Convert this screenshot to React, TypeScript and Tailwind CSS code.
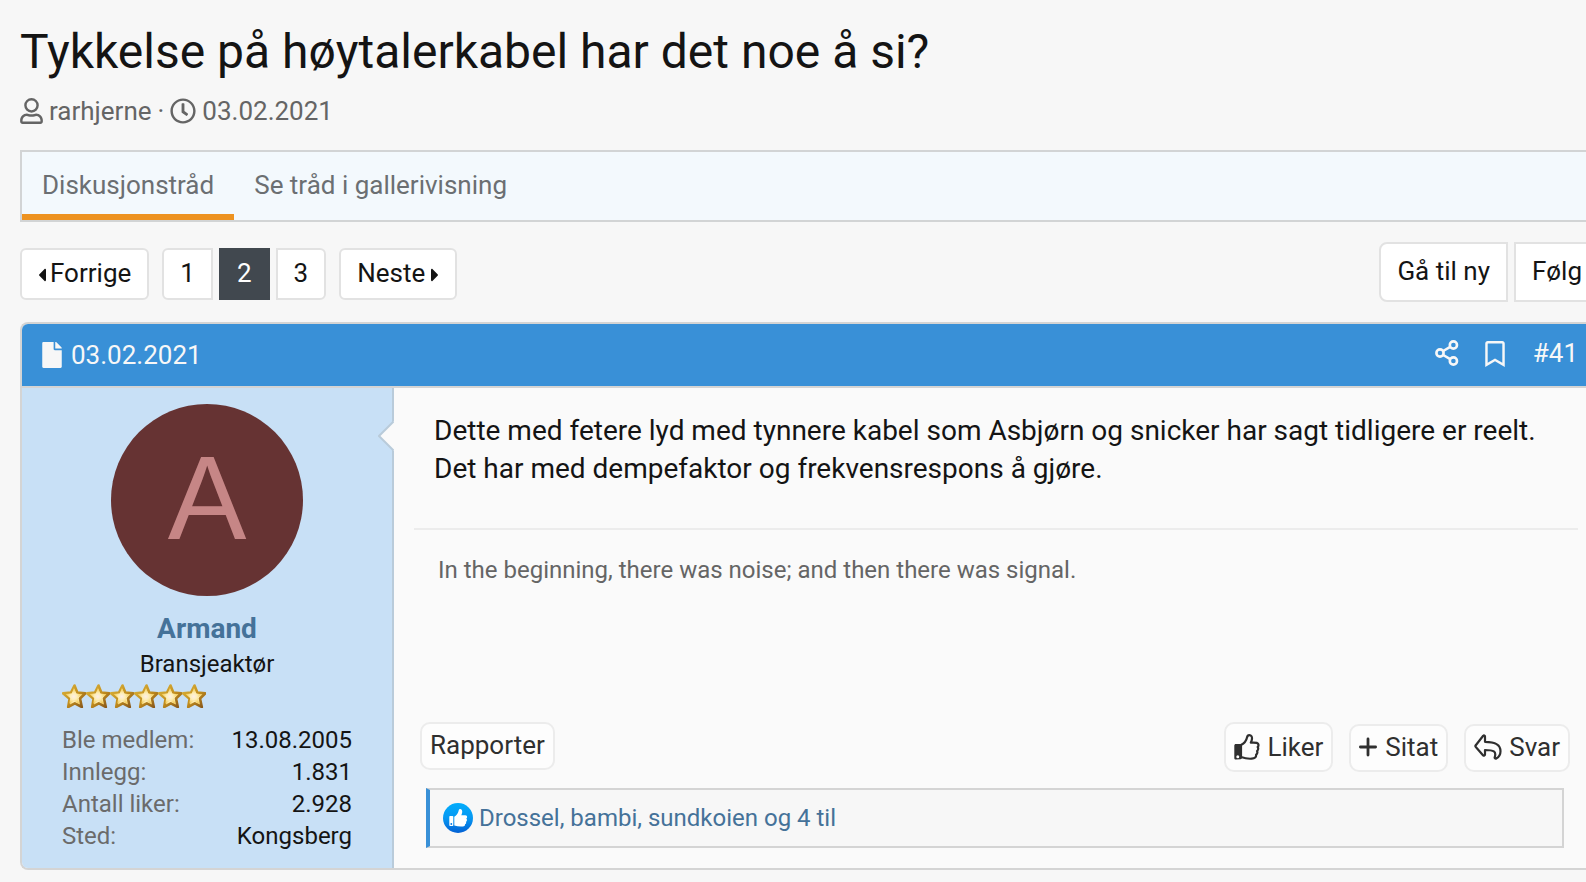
import React from 'react';
import { FaCaretLeft, FaCaretRight, FaFile, FaRegBookmark, FaRegClock } from 'react-icons/fa';

interface IconProps {
  className?: string;
}

const UserIcon: React.FC<IconProps> = ({ className }) => (
  <svg viewBox="0 0 448 512" className={className} fill="currentColor" aria-hidden="true">
    <path d="M224 0a144 144 0 1 0 0 288 144 144 0 0 0 0-288zm0 48a96 96 0 1 1 0 192 96 96 0 0 1 0-192zM313.600 304c-28.700 0-42.500 16-89.600 16s-60.800-16-89.600-16C60.200 304 0 364.200 0 438.400V464c0 26.500 21.500 48 48 48h352c26.500 0 48-21.500 48-48v-25.600c0-74.200-60.200-134.400-134.400-134.400zM400 464H48v-25.600c0-47.600 38.800-86.400 86.400-86.400 14.600 0 38.300 16 89.600 16 51.700 0 74.900-16 89.600-16 47.600 0 86.400 38.800 86.400 86.400z" />
  </svg>
);

const ShareIcon: React.FC<IconProps> = ({ className }) => (
  <svg viewBox="0 0 24 26" className={className} fill="none" stroke="currentColor" strokeWidth="2.6" aria-hidden="true">
    <circle cx="5" cy="13" r="3.6" />
    <circle cx="18.400" cy="5" r="3.6" />
    <circle cx="18.400" cy="21" r="3.6" />
    <path d="M8.200 11l7-4.200M8.200 15l7 4.200" />
  </svg>
);

const ThumbIcon: React.FC<IconProps> = ({ className }) => (
  <svg viewBox="0 0 26 26" className={className} aria-hidden="true">
    <path
      d="M7 11c2.800-1.400 5.300-4.200 6-7.500.3-1.400.8-2.400 2.200-2.400 2.200 0 3.100 1.800 2.700 4.200-.2 1.500-.9 2.500-1.100 3.400 2.600-.1 4.600-.1 6 .2 1.300.4 1.900 1.500 1.600 2.800-.1.600-.4 1-.7 1.300.5.700.6 1.500.4 2.300-.2.800-.5 1.300-1 1.700.3.700.4 1.400.1 2.100-.2.700-.6 1.200-1.100 1.500.4 2.500-1.300 3.900-4.400 4.100-3.800.3-7.700-.6-10.700-1.700z"
      fill="none"
      stroke="currentColor"
      strokeWidth="2.2"
      strokeLinejoin="round"
    />
    <path
      d="M2 10h4.500c.9 0 1.500.6 1.500 1.500v12.200c0 .8-.6 1.400-1.500 1.500L2 25.600c-1.100 0-1.700-.6-1.700-1.600V11.700C.3 10.700.9 10 2 10zm1.800 11.300a1.500 1.500 0 1 0 0 3 1.500 1.500 0 0 0 0-3z"
      fill="currentColor"
      fillRule="evenodd"
    />
  </svg>
);

const PlusIcon: React.FC<IconProps> = ({ className }) => (
  <svg viewBox="0 0 18 20" className={className} fill="none" stroke="currentColor" strokeWidth="2.8" strokeLinecap="round" aria-hidden="true">
    <path d="M9 2v16M1.400 10h15.200" />
  </svg>
);

const ReplyIcon: React.FC<IconProps> = ({ className }) => (
  <svg viewBox="0 0 28 26" className={className} fill="none" stroke="currentColor" strokeWidth="2.2" strokeLinejoin="round" aria-hidden="true">
    <path d="M11 2.500v5.300c9 0 15.500 2 15.500 9.400 0 3.200-2 6-4.300 7.300-.8.500-1.800-.2-1.500-1.100 2-6.200-1-7.400-9.700-7.400v4.600c0 1-1.100 1.400-1.800.8L1.800 13c-.6-.5-.6-1.300 0-1.800l7.400-9.400c.7-.6 1.800-.3 1.800.7z" />
  </svg>
);

const StarIcon: React.FC<IconProps> = ({ className }) => (
  <svg viewBox="0 0 24 24" className={className} aria-hidden="true">
    <defs>
      <radialGradient id="star-fill" cx="50%" cy="55%" r="50%">
        <stop offset="0" stopColor="#fdeee6" />
        <stop offset="0.400" stopColor="#fdeeb8" />
        <stop offset="1" stopColor="#f3c748" />
      </radialGradient>
      <linearGradient id="star-edge" x1="0" y1="0" x2="1" y2="1">
        <stop offset="0" stopColor="#dcb53c" />
        <stop offset="0.550" stopColor="#c08c1e" />
        <stop offset="1" stopColor="#80501a" />
      </linearGradient>
    </defs>
    <path
      d="M12.500 1.500l2.800 7 8 .8-5.300 5.200 1.800 8.500-7-3.700-6.600 3.700 1.400-8.200-6.600-5.500 8-.8z"
      fill="url(#star-fill)"
      stroke="url(#star-edge)"
      strokeWidth="2.6"
      strokeLinejoin="round"
    />
    <path d="M12 3.500l2 6.200 6 .5-4.300 3.600 1.300 6-5-3-4.800 3 1-5.800L3.500 10l6.300-.4z" fill="url(#star-fill)" />
  </svg>
);

const LikeBadge: React.FC<IconProps> = ({ className }) => (
  <svg viewBox="0 0 30 30" className={className} aria-hidden="true">
    <defs>
      <linearGradient id="like-fill" x1="0" y1="0" x2="0" y2="1">
        <stop offset="0" stopColor="#02adfc" />
        <stop offset="0.500" stopColor="#0798f2" />
        <stop offset="1" stopColor="#0360d4" />
      </linearGradient>
    </defs>
    <circle cx="15" cy="15" r="15" fill="url(#like-fill)" />
    <rect x="6.300" y="13" width="4" height="10" rx="0.800" fill="#fff" />
    <circle cx="8.300" cy="21" r="0.900" fill="#0478e3" />
    <path
      fill="#fff"
      d="M11.300 13.800c2-1.200 3.500-3.200 4.200-5.500.3-1 .4-2 1.400-2.200 1.600-.2 2.600 1.500 2.300 3.200-.2 1.300-.6 2.200-.9 2.900h4c1.200 0 1.900.9 1.800 1.900 0 .8-.5 1.300-.9 1.500.6.400.9 1 .7 1.800-.1.700-.6 1.200-1 1.400.3.400.4.900.2 1.400-.2.700-.7 1-1.100 1.100.4 1.200-.6 2-2.200 2.100-3 .2-6-.1-8.500-1z"
    />
  </svg>
);

const stats = [
  { label: 'Ble medlem:', value: '13.08.2005' },
  { label: 'Innlegg:', value: '1.831' },
  { label: 'Antall liker:', value: '2.928' },
  { label: 'Sted:', value: 'Kongsberg' },
];

const ThreadHeader = () => (
  <header className="pl-5">
    <h1 className="text-5xl leading-[56px]">Tykkelse på høytalerkabel har det noe å si?</h1>
    <div className="mt-[14px] flex items-center text-[26px] leading-[34px] text-[#656565]">
      <UserIcon className="mr-[6px] h-[26px] w-[23px]" />
      <a href="#rarhjerne">rarhjerne</a>
      <span className="mx-[6px]">·</span>
      <FaRegClock className="mr-[6px] h-[26px] w-[26px]" />
      <a href="#start">
        <time dateTime="2021-02-03">03.02.2021</time>
      </a>
    </div>
  </header>
);

const Tabs = () => (
  <nav className="mt-[22px] ml-5 flex h-[72px] border-2 border-r-0 border-[#d2d4d5] bg-[#f3f9fd] text-[26px] leading-[34px] text-[#6b6f72]">
    <a href="#thread" aria-current="page" className="border-b-[6px] border-[#ed9321] px-5 pt-4">
      Diskusjonstråd
    </a>
    <a href="#gallery" className="px-5 pt-4">
      Se tråd i gallerivisning
    </a>
  </nav>
);

const Pager = () => (
  <div className="mt-5 ml-5 flex items-start justify-between text-[26px] leading-[34px]">
    <nav aria-label="Sider" className="mt-[6px] flex h-[52px] items-stretch">
      <a href="#page-1" className="mr-[13px] flex items-center rounded-md border-2 border-[#e2e2e2] bg-white px-4 pb-0.5">
        <FaCaretLeft className="mt-1 mr-1 h-[22px] w-2" />
        Forrige
      </a>
      <div className="mr-[13px] flex gap-[6px]">
        <a href="#page-1" className="rounded-l-md border-2 border-[#e2e2e2] bg-white px-4 pt-[6px]">1</a>
        <a href="#page-2" aria-current="page" className="bg-[#41484f] px-[18px] pt-2 text-white">2</a>
        <a href="#page-3" className="rounded-r-md border-2 border-[#e2e2e2] bg-white px-4 pt-[6px]">3</a>
      </div>
      <a href="#page-3" className="flex items-center rounded-md border-2 border-[#e2e2e2] bg-white px-4 pb-0.5">
        Neste
        <FaCaretRight className="mt-1 ml-[6px] h-[22px] w-2" />
      </a>
    </nav>
    <div className="flex h-[60px] gap-[6px]">
      <button type="button" className="rounded-l-lg border-2 border-[#e2e2e2] bg-white px-4 pb-0.5">Gå til ny</button>
      <button type="button" className="border-2 border-r-0 border-[#e2e2e2] bg-white pr-1 pb-0.5 pl-4">Følg</button>
    </div>
  </div>
);

const UserPanel = () => (
  <aside className="relative w-[372px] shrink-0 rounded-bl-md border-r-2 border-[#b9cbda] bg-[#c8e0f6] px-10 py-4">
    <div className="mx-auto flex h-48 w-48 items-center justify-center rounded-full bg-[#663333] pb-1 font-['Liberation_Sans',Arial,sans-serif] text-[118px] leading-none text-[#c68686]">
      A
    </div>
    <h2 className="mt-4 text-center text-[28px] leading-[34px] font-bold text-[#457299]">
      <a href="#armand">Armand</a>
    </h2>
    <p className="mt-0.5 text-center text-2xl leading-8">Bransjeaktør</p>
    <div className="mt-1 flex" role="img" aria-label="6 stjerner">
      {[0, 1, 2, 3, 4, 5].map((n) => (
        <StarIcon key={n} className="h-6 w-6" />
      ))}
    </div>
    <dl className="mt-4 text-2xl leading-8">
      {stats.map((row) => (
        <div key={row.label} className="flex justify-between">
          <dt className="text-[#6b6b6b]">{row.label}</dt>
          <dd>{row.value}</dd>
        </div>
      ))}
    </dl>
    {/* Arrow pointing from the message to the author */}
    <svg viewBox="0 0 16 30" className="absolute top-[33px] -right-0.5 h-[30px] w-4" aria-hidden="true">
      <path d="M16 0v30L1 15z" fill="#fafafa" />
      <path d="M15.500 0.500L1 15l14.500 14.500" fill="none" stroke="#b9cbda" strokeWidth="2" />
    </svg>
  </aside>
);

const actionClass = 'flex items-center rounded-[10px] border-2 border-[#ececec] bg-[#fdfdfd] px-2 text-[26px] leading-[34px]';

const Message = () => (
  <div className="flex min-w-0 flex-1 flex-col bg-[#fafafa] pr-2 pl-5">
    <p className="mt-6 px-5 text-[28px] leading-[38px]">
      Dette med fetere lyd med tynnere kabel som Asbjørn og snicker har sagt tidligere er reelt.
      <br />
      Det har med dempefaktor og frekvensrespons å gjøre.
    </p>
    <div className="mt-10 border-t-2 border-[#ececec] px-6 pt-6 text-2xl leading-8 text-[#656565]">
      In the beginning, there was noise; and then there was signal.
    </div>
    <div className="mt-auto flex items-end justify-between pr-2 pl-[6px] text-[#2f2f2f]">
      <button type="button" className={`${actionClass} mb-[2px] h-12 pb-0.5`}>Rapporter</button>
      <div className="flex items-end gap-4">
        <button type="button" className={`${actionClass} h-[50px]`}>
          <ThumbIcon className="mr-[7px] h-[26px] w-[26px]" />
          Liker
        </button>
        <button type="button" className={`${actionClass} h-12 pb-0.5`}>
          <PlusIcon className="mr-2 h-5 w-[18px]" />
          Sitat
        </button>
        <button type="button" className={`${actionClass} h-12 pb-0.5`}>
          <ReplyIcon className="mr-[7px] h-[26px] w-7" />
          Svar
        </button>
      </div>
    </div>
    <div className="mt-4 mr-[14px] mb-5 ml-3 flex h-[60px] items-center border-2 border-l-4 border-[#d4d4d4] border-l-[#3990d7] bg-[#f7f7f7] pl-[13px] text-2xl leading-8 text-[#457299]">
      <LikeBadge className="mr-[6px] h-[30px] w-[30px]" />
      <a href="#reactions">Drossel, bambi, sundkoien og 4 til</a>
    </div>
  </div>
);

const Post = () => (
  <article className="mt-5 ml-5 rounded-l-lg border-2 border-r-0 border-[#d4d4d4]">
    <div className="flex h-16 items-center justify-between rounded-tl-md border-b-2 border-[#d4d4d4] bg-[#3990d7] pr-2 pl-5 text-[26px] leading-[34px] text-[#f7f7f7]">
      <a href="#post-41" className="flex items-center">
        <FaFile className="mr-[9px] h-[26px] w-5" />
        <time dateTime="2021-02-03">03.02.2021</time>
      </a>
      <div className="flex items-center pb-1">
        <button type="button" aria-label="Del" className="mr-[26px]">
          <ShareIcon className="h-[26px] w-6" />
        </button>
        <button type="button" aria-label="Bokmerke" className="mr-7">
          <FaRegBookmark className="mt-0.5 h-[26px] w-5" />
        </button>
        <a href="#post-41">#41</a>
      </div>
    </div>
    <div className="flex">
      <UserPanel />
      <Message />
    </div>
  </article>
);

export default function App() {
  return (
    <main className="min-h-screen overflow-hidden bg-[#f7f7f7] pt-6 pb-3 font-[Roboto,sans-serif] text-[#141414]">
      <ThreadHeader />
      <Tabs />
      <Pager />
      <Post />
    </main>
  );
}
